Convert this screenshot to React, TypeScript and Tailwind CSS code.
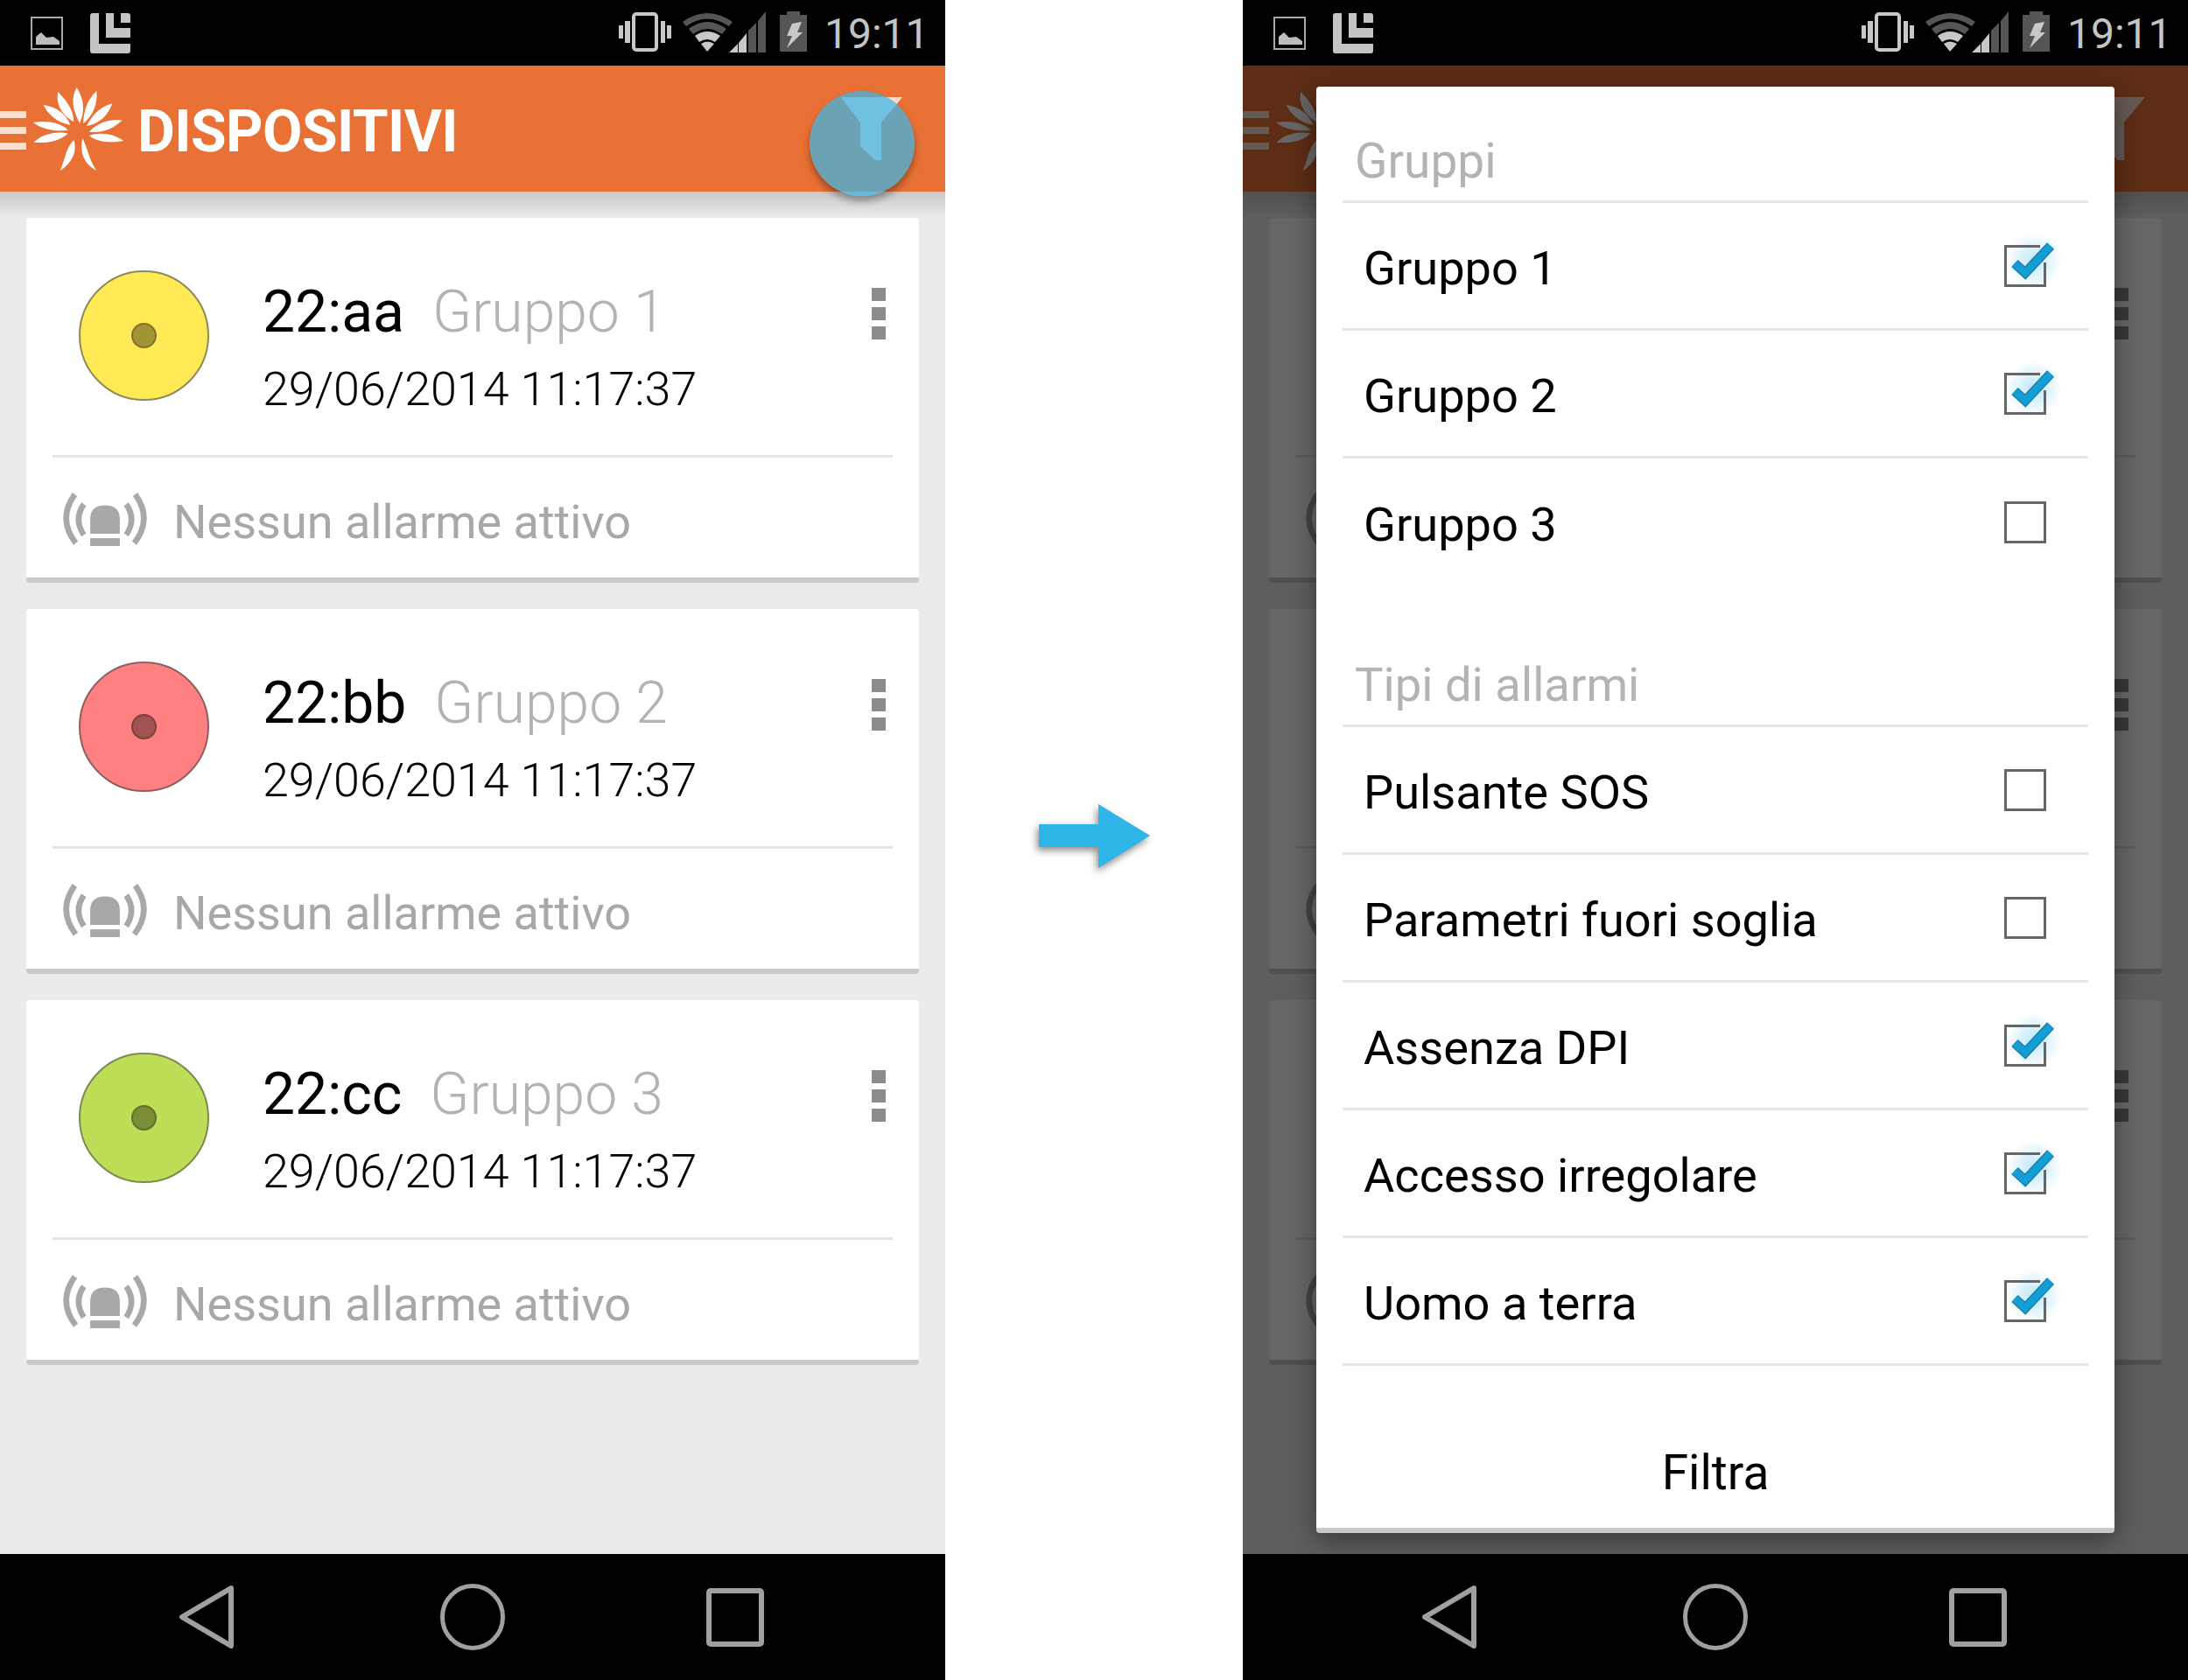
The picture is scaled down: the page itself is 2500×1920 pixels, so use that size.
const leaves = [
  "M272 182C246 135 242 95 262 60C286 98 292 140 272 182Z",
  "M252 178C205 150 190 110 198 75C225 105 250 130 252 178Z",
  "M284 184C286 135 300 100 330 72C334 115 320 155 284 184Z",
  "M240 188C195 180 165 155 148 120C190 125 225 150 240 188Z",
  "M296 192C318 150 345 125 384 115C370 155 340 185 296 192Z",
  "M232 206C190 212 145 205 113 180C155 172 205 178 232 206Z",
  "M305 212C335 180 375 168 418 172C390 200 350 218 305 212Z",
  "M232 218C200 245 160 252 115 248C140 222 190 208 232 218Z",
  "M305 225C340 212 390 218 423 243C385 250 335 250 305 225Z",
  "M252 240C265 280 245 320 205 345C222 310 222 270 252 240Z",
  "M282 235C270 285 290 325 330 345C305 310 300 270 282 235Z",
];

function Logo() {
  return (
    <svg className="w-[104px] h-[95px] shrink-0" viewBox="113 60 312 285">
      {leaves.map((d) => (
        <path key={d} d={d} fill="#ffffff" />
      ))}
    </svg>
  );
}

function Funnel() {
  return (
    <svg className="w-[70px] h-[72px]" viewBox="961 111 70 72">
      <path d="M961 111H1031L1007 140V183H1000L983 167V140Z" fill="#fcdfd0" />
    </svg>
  );
}

function StatusBar() {
  return (
    <div className="h-[75px] bg-black flex items-start shrink-0 relative z-10">
      <svg className="ml-[35px] mt-[19px] w-[37px] h-[38px]" viewBox="35 19 37 38">
        <rect x="36" y="20" width="35" height="36" fill="none" stroke="#a8a8a8" strokeWidth="2" />
        <path d="M41 51V42L47 37L53 43L61 42L68 47V51Z" fill="#bdbdbd" />
      </svg>
      <svg className="ml-[31px] mt-[15px] w-[46px] h-[46px]" viewBox="103 15 46 46">
        <path d="M106 15H113V50H149V58Q149 61 146 61H106Q103 61 103 58V18Q103 15 106 15Z" fill="#c4c4c4" />
        <path d="M121 15H130V32H149V43H121Z" fill="#c4c4c4" />
        <path d="M138 15H146Q149 15 149 18V26H138Z" fill="#c4c4c4" />
      </svg>
      <svg className="ml-[558px] mt-[14px] w-[60px] h-[45px]" viewBox="707 14 60 45">
        <rect x="724" y="16" width="26" height="41" rx="3" fill="none" stroke="#c8c8c8" strokeWidth="4" />
        <path d="M707 29h5v15h-5zM714 24h6v25h-6zM755 24h5v25h-5zM762 29h5v15h-5z" fill="#c8c8c8" />
      </svg>
      <svg className="ml-[13px] mt-[13px] w-[95px] h-[47px]" viewBox="780 13 95 47">
        <path d="M780 25Q808 5 837 25L833 30Q808 13 784 30Z" fill="#555555" />
        <path d="M787 33Q808 17 830 33L825 39Q808 27 792 39Z" fill="#555555" />
        <path d="M794 41Q808 31 823 41L817 48Q808 42 799 48Z" fill="#c8c8c8" />
        <path d="M801 50Q808 45 816 50L808 59Z" fill="#c8c8c8" />
        <path d="M833 60L843 50V60ZM844 49L853 38V60H844Z" fill="#c8c8c8" />
        <path d="M855 35L864 26V60H855ZM866 24L875 13V60H866Z" fill="#555555" />
      </svg>
      <svg className="ml-[16px] mt-[13px] w-[31px] h-[47px]" viewBox="891 13 31 47">
        <path d="M899 13H914V17H922V59H891V17H899Z" fill="#555555" />
        <path d="M905 27L916 25L911 37L917 37L899 55L905 41L899 41Z" fill="#c8c8c8" />
      </svg>
      <span className="ml-[20px] text-[48px] leading-[52px] mt-[13px] text-[#c4c4c4] whitespace-nowrap">19:11</span>
    </div>
  );
}

function AlarmIcon() {
  return (
    <svg className="w-[98px] h-[62px] shrink-0 mt-[3px]" viewBox="97 65 288 187">
      <g fill="none" stroke="#a8a8a8" strokeWidth="20">
        <path d="M168 108Q132 160 168 214" />
        <path d="M137 74Q76 158 140 242" />
        <path d="M314 108Q350 160 314 214" />
        <path d="M345 74Q406 158 342 242" />
      </g>
      <path d="M190 210V160Q190 112 241 112Q292 112 292 160V210Z" fill="#a8a8a8" />
      <rect x="190" y="225" width="102" height="27" fill="#a8a8a8" />
    </svg>
  );
}

function Card({ id, group, fill, stroke, dot, covered }: { id: string; group: string; fill: string; stroke: string; dot: string; covered?: boolean }) {
  return (
    <div className="h-[417px] bg-white rounded-[4px] border-b-[6px] border-[#c9c9c9] flex flex-col">
      <div className="h-[271px] flex items-start relative">
        <div className={`ml-[60px] mt-[60px] w-[149px] h-[149px] rounded-full border-2 flex items-center justify-center shrink-0 ${fill} ${stroke}`}>
          <div className={`w-[29px] h-[29px] rounded-full border-2 ${dot}`} />
        </div>
        <div className="ml-[61px] pt-[68px] flex-1">
          {!covered && (
            <>
              <div className="flex items-baseline gap-[32px] leading-[80px] text-[66px]">
                <span className="text-black">{id}</span>
                <span className="font-light text-[#b3b3b3]">{group}</span>
              </div>
              <div className="mt-[16px] text-[53.8px] leading-[64px] font-light text-black whitespace-nowrap">29/06/2014 11:17:37</div>
            </>
          )}
        </div>
        <div className="mr-[38px] mt-[80px] flex flex-col gap-[7px]">
          <div className="w-[16px] h-[15px] bg-[#8c8c8c]" />
          <div className="w-[16px] h-[15px] bg-[#8c8c8c]" />
          <div className="w-[16px] h-[15px] bg-[#8c8c8c]" />
        </div>
      </div>
      <div className="mx-[30px] h-[3px] bg-[#e5e5e5] shrink-0" />
      <div className="flex-1 flex items-center pl-[41px] gap-[29px]">
        <AlarmIcon />
        {!covered && (
          <span className="mt-[10px] text-[54px] leading-[60px] text-[#a8a8a8] whitespace-nowrap">Nessun allarme attivo</span>
        )}
      </div>
    </div>
  );
}

function Check({ on }: { on: boolean }) {
  return (
    <svg className="w-[48px] h-[48px] overflow-visible shrink-0" viewBox="0 0 48 48">
      <defs>
        <radialGradient id="glow">
          <stop offset="0" stopColor="#9fdcf7" />
          <stop offset="1" stopColor="#9fdcf7" stopOpacity="0" />
        </radialGradient>
      </defs>
      {on ? (
        <>
          <circle cx="34" cy="18" r="32" fill="url(#glow)" opacity="0.7" />
          <path d="M41 1.5H1.5V46.5H46.5V20" fill="none" stroke="#666666" strokeWidth="3" />
          <path d="M12 21L24 32L53 1" fill="none" stroke="#1f7ea4" strokeWidth="11" />
          <path d="M12 21L24 32L53 1" fill="none" stroke="#129fd6" strokeWidth="8" />
        </>
      ) : (
        <rect x="1.5" y="1.5" width="45" height="45" fill="none" stroke="#666666" strokeWidth="3" />
      )}
    </svg>
  );
}

function Row({ label, on, line = true }: { label: string; on: boolean; line?: boolean }) {
  return (
    <div className={`mx-[30px] h-[146px] flex items-center justify-between pl-[24px] pr-[48px] ${line ? "border-b-[3px] border-[#e5e5e5]" : ""}`}>
      <span className="mt-[6px] text-[54.2px] leading-[64px] text-black whitespace-nowrap">{label}</span>
      <Check on={on} />
    </div>
  );
}

function Dialog() {
  return (
    <div className="absolute left-[84px] top-[99px] w-[912px] h-[1653px] bg-white rounded-[4px] border-b-[6px] border-[#c9c9c9] shadow-[0_8px_30px_rgba(0,0,0,0.4)] flex flex-col">
      <div className="mx-[30px] h-[133px] border-b-[3px] border-[#e5e5e5] pl-[14px] pt-[53px] text-[55px] leading-[64px] text-[#b3b3b3] shrink-0">Gruppi</div>
      <Row label="Gruppo 1" on />
      <Row label="Gruppo 2" on />
      <Row label="Gruppo 3" on={false} line={false} />
      <div className="mx-[30px] h-[161px] border-b-[3px] border-[#e5e5e5] pl-[14px] pt-[81px] text-[54.4px] leading-[64px] text-[#b3b3b3] shrink-0">Tipi di allarmi</div>
      <Row label="Pulsante SOS" on={false} />
      <Row label="Parametri fuori soglia" on={false} />
      <Row label="Assenza DPI" on />
      <Row label="Accesso irregolare" on />
      <Row label="Uomo a terra" on />
      <div className="flex-1 flex items-end justify-center pb-[31px] text-[55px] leading-[64px] text-black">Filtra</div>
    </div>
  );
}

function NavBar() {
  return (
    <div className="h-[144px] bg-black flex items-center shrink-0 relative z-10">
      <svg className="ml-[205px] w-[63px] h-[72px]" viewBox="0 0 63 72">
        <path d="M59 3L3 36L59 69Z" fill="none" stroke="#a0a0a0" strokeWidth="6" strokeLinejoin="round" />
      </svg>
      <svg className="ml-[235px] w-[74px] h-[76px]" viewBox="0 0 74 76">
        <ellipse cx="37" cy="38" rx="34.5" ry="35.5" fill="none" stroke="#a0a0a0" strokeWidth="5" />
      </svg>
      <svg className="ml-[230px] w-[66px] h-[67px]" viewBox="0 0 66 67">
        <rect x="3" y="3" width="60" height="61" rx="2" fill="none" stroke="#a0a0a0" strokeWidth="6" />
      </svg>
    </div>
  );
}

function Phone({ dialog }: { dialog?: boolean }) {
  return (
    <div className="relative w-[1080px] h-[1920px] flex flex-col bg-[#ebebeb] shrink-0 overflow-hidden">
      <StatusBar />
      <div className="h-[144px] bg-[#e97135] flex items-center shrink-0 relative">
        <div className="flex flex-col gap-[10px] w-[30px] mt-[4px]">
          <div className="h-[8px] bg-[#fcdfd0]" />
          <div className="h-[8px] bg-[#fcdfd0]" />
          <div className="h-[8px] bg-[#fcdfd0]" />
        </div>
        <div className="ml-[8px]"><Logo /></div>
        {!dialog && (
          <div className="ml-[15px] mt-[8px] text-[66px] leading-[72px] font-bold text-white tracking-[-0.6px]">DISPOSITIVI</div>
        )}
        <div className="ml-auto mr-[49px]"><Funnel /></div>
        {!dialog && (
          <div className="absolute left-[925px] top-[29px] w-[120px] h-[120px] rounded-full bg-[rgba(58,182,231,0.72)] shadow-[0_6px_8px_rgba(0,0,0,0.35)] z-10" />
        )}
        <div className="absolute left-0 right-0 top-full h-[30px] bg-linear-to-b from-[#c9c9c9] to-[#ebebeb]" />
      </div>
      <div className="flex-1 relative flex flex-col gap-[30px] px-[30px] pt-[30px]">
        <Card id="22:aa" group="Gruppo 1" fill="bg-[#ffe955]" stroke="border-[#8f8a5a]" dot="bg-[#a09434] border-[#7d7430]" covered={dialog} />
        <Card id="22:bb" group="Gruppo 2" fill="bg-[#ff8080]" stroke="border-[#8f5f5f]" dot="bg-[#a35252] border-[#7d4040]" covered={dialog} />
        <Card id="22:cc" group="Gruppo 3" fill="bg-[#bede58]" stroke="border-[#7c8c50]" dot="bg-[#7a8e38] border-[#5f7030]" covered={dialog} />
      </div>
      <NavBar />
      {dialog && (
        <>
          <div className="absolute left-0 right-0 top-[75px] h-[1701px] bg-black/60" />
          <Dialog />
        </>
      )}
    </div>
  );
}

export default function App() {
  return (
    <div className="w-[2500px] h-[1920px] flex bg-white font-[Roboto,sans-serif]">
      <Phone />
      <div className="flex-1 flex items-center justify-center pb-[10px]">
        <svg className="w-[127px] h-[73px] overflow-visible drop-shadow-[-2px_4px_4px_rgba(0,0,0,0.45)]" viewBox="0 0 127 73">
          <path d="M0 23H68V0L127 36L68 73V49H0Z" fill="#2fb5e8" />
        </svg>
      </div>
      <Phone dialog />
    </div>
  );
}
